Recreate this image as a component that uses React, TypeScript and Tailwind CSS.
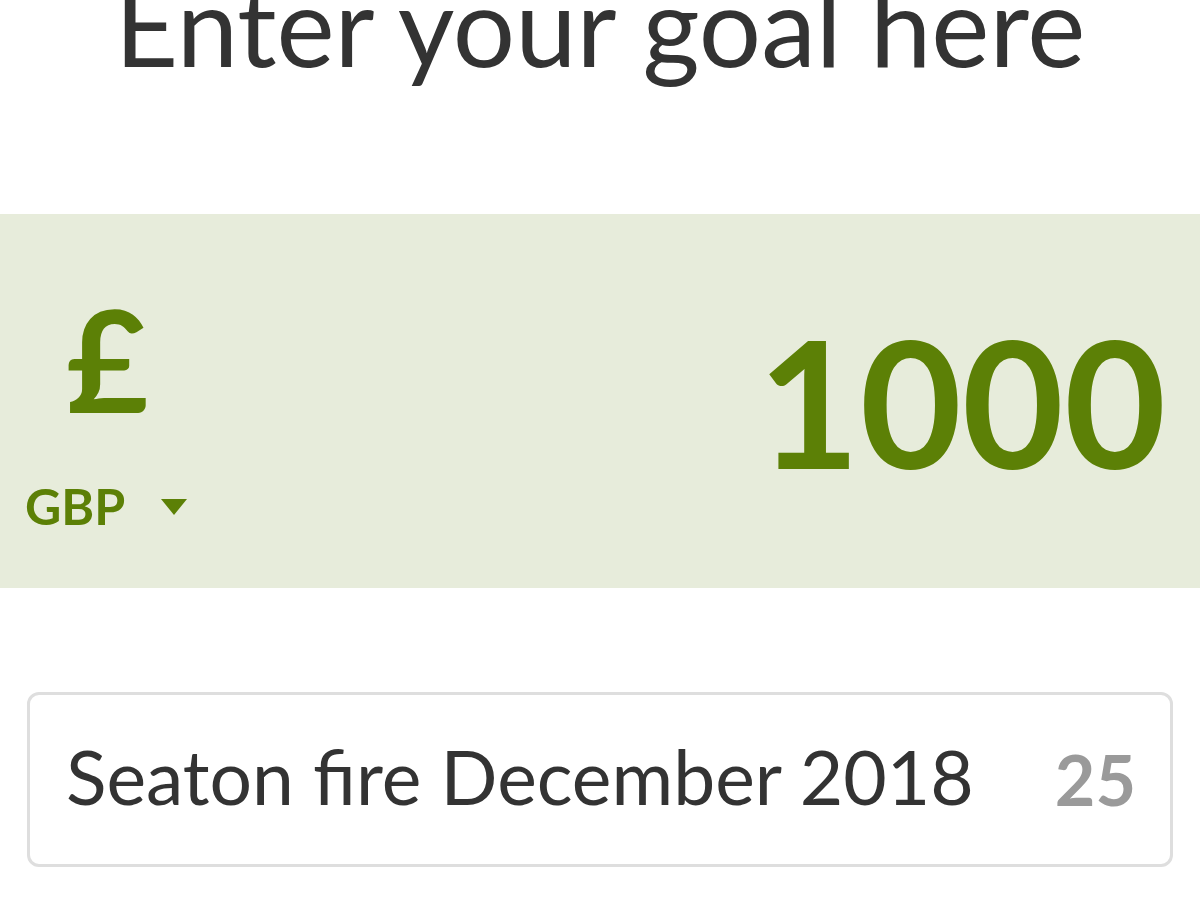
export default function App() {
  return (
    <div className="w-[1200px] h-[900px] overflow-hidden bg-white font-['Lato',sans-serif]">
      <div className="h-[214px] overflow-hidden">
        <h1 className="text-center text-[#333333] text-[110px] leading-[110px] -mt-[31px] whitespace-nowrap">
          Enter your goal here
        </h1>
      </div>

      <div className="h-[374px] bg-[#e7ecdb] flex items-center justify-between pl-[25px] pr-[34px]">
        <div className="flex flex-col items-start mt-[16px]">
          <div className="pl-[41px] text-[#5c8006] font-bold text-[142px] leading-none">£</div>
          <div className="flex items-center gap-[36px] mt-[52px] text-[#5c8006] font-bold text-[50px] leading-none">
            <span>GBP</span>
            <svg width="26" height="16" viewBox="0 0 26 16" className="mt-[2px]">
              <path d="M0 0H26L13 16Z" fill="#5c8006" />
            </svg>
          </div>
        </div>
        <div className="text-[#5c8006] font-bold text-[176px] leading-none mt-[0px]">1000</div>
      </div>

      <div className="px-[27px] pt-[104px]">
        <div className="h-[175px] border-[3px] border-[#dedede] rounded-[12px] flex items-center justify-between pl-[36px] pr-[34px]">
          <span className="text-[#333333] text-[75px] leading-none -mt-[6px]">Seaton fire December 2018</span>
          <span className="text-[#9a9a9a] font-bold text-[70px] leading-none -mt-[2px]">25</span>
        </div>
      </div>
    </div>
  );
}
